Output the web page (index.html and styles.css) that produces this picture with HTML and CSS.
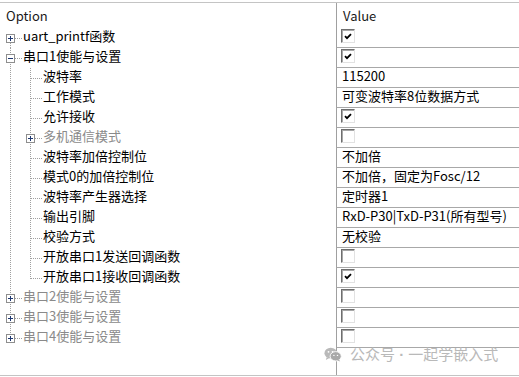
FILE: index.html
```html
<!DOCTYPE html>
<html>
<head>
<meta charset="utf-8">
<link rel="stylesheet" href="styles.css">
</head>
<body>
<div class="grid">
  <div class="hd">Option</div>
  <div class="hd v">Value</div>

  <div class="opt"><span class="g vb h"><svg class="box" viewBox="0 0 9 9"><rect x=".5" y=".5" width="8" height="8"/><path d="M2 4.5h5M4.5 2v5"/></svg></span><span class="lbl">uart_printf函数</span></div>
  <div class="val"><span class="cb"><svg viewBox="0 0 8 7"><path d="M1 3.2L3 5.2L7 1.2"/></svg></span></div>

  <div class="opt"><span class="g v h"><svg class="box" viewBox="0 0 9 9"><rect x=".5" y=".5" width="8" height="8"/><path d="M2 4.5h5"/></svg></span><span class="lbl">串口1使能与设置</span></div>
  <div class="val"><span class="cb"><svg viewBox="0 0 8 7"><path d="M1 3.2L3 5.2L7 1.2"/></svg></span></div>

  <div class="opt"><span class="g v"></span><span class="g v h"></span><span class="lbl">波特率</span></div>
  <div class="val"><span class="t">115200</span></div>

  <div class="opt"><span class="g v"></span><span class="g v h"></span><span class="lbl">工作模式</span></div>
  <div class="val"><span class="t">可变波特率8位数据方式</span></div>

  <div class="opt"><span class="g v"></span><span class="g v h"></span><span class="lbl">允许接收</span></div>
  <div class="val"><span class="cb"><svg viewBox="0 0 8 7"><path d="M1 3.2L3 5.2L7 1.2"/></svg></span></div>

  <div class="opt"><span class="g v"></span><span class="g v h"><svg class="box" viewBox="0 0 9 9"><rect x=".5" y=".5" width="8" height="8"/><path d="M2 4.5h5M4.5 2v5"/></svg></span><span class="lbl dim">多机通信模式</span></div>
  <div class="val"><span class="cb off"></span></div>

  <div class="opt"><span class="g v"></span><span class="g v h"></span><span class="lbl">波特率加倍控制位</span></div>
  <div class="val"><span class="t">不加倍</span></div>

  <div class="opt"><span class="g v"></span><span class="g v h"></span><span class="lbl">模式0的加倍控制位</span></div>
  <div class="val"><span class="t">不加倍，固定为Fosc/12</span></div>

  <div class="opt"><span class="g v"></span><span class="g v h"></span><span class="lbl">波特率产生器选择</span></div>
  <div class="val"><span class="t">定时器1</span></div>

  <div class="opt"><span class="g v"></span><span class="g v h"></span><span class="lbl">输出引脚</span></div>
  <div class="val"><span class="t">RxD-P30|TxD-P31(所有型号)</span></div>

  <div class="opt"><span class="g v"></span><span class="g v h"></span><span class="lbl">校验方式</span></div>
  <div class="val"><span class="t">无校验</span></div>

  <div class="opt"><span class="g v"></span><span class="g v h"></span><span class="lbl">开放串口1发送回调函数</span></div>
  <div class="val"><span class="cb off"></span></div>

  <div class="opt"><span class="g v"></span><span class="g vt h"></span><span class="lbl">开放串口1接收回调函数</span></div>
  <div class="val"><span class="cb"><svg viewBox="0 0 8 7"><path d="M1 3.2L3 5.2L7 1.2"/></svg></span></div>

  <div class="opt"><span class="g v h"><svg class="box" viewBox="0 0 9 9"><rect x=".5" y=".5" width="8" height="8"/><path d="M2 4.5h5M4.5 2v5"/></svg></span><span class="lbl dim">串口2使能与设置</span></div>
  <div class="val"><span class="cb off"></span></div>

  <div class="opt"><span class="g v h"><svg class="box" viewBox="0 0 9 9"><rect x=".5" y=".5" width="8" height="8"/><path d="M2 4.5h5M4.5 2v5"/></svg></span><span class="lbl dim">串口3使能与设置</span></div>
  <div class="val"><span class="cb off"></span></div>

  <div class="opt"><span class="g vt h"><svg class="box" viewBox="0 0 9 9"><rect x=".5" y=".5" width="8" height="8"/><path d="M2 4.5h5M4.5 2v5"/></svg></span><span class="lbl dim">串口4使能与设置</span></div>
  <div class="val"><span class="cb off"></span></div>

  <div class="fill-l"></div>
  <div class="fill-r"></div>
</div>

<div class="wm">
  <svg class="wx" viewBox="0 0 20 16">
    <ellipse cx="7.5" cy="6.5" rx="7" ry="6" fill="#b9b9b9"/>
    <path d="M3 11l-1 3 3.5-1.8z" fill="#b9b9b9"/>
    <ellipse cx="13" cy="10" rx="6.2" ry="5.2" fill="#a9a9a9" stroke="#fff" stroke-width="1"/>
    <path d="M16.5 13.5l1.5 2.2-3.5-1.2z" fill="#a9a9a9"/>
    <circle cx="5" cy="5" r="1" fill="#fff"/>
    <circle cx="9.5" cy="5" r="1" fill="#fff"/>
    <circle cx="11" cy="9" r=".8" fill="#fff"/>
    <circle cx="15" cy="9" r=".8" fill="#fff"/>
  </svg>
  <span>公众号<span class="dot"> · </span>一起学嵌入式</span>
</div>
</body>
</html>
```

FILE: styles.css
```css
html, body {
  margin: 0;
  background: #fff;
}
body {
  width: 519px;
  height: 377px;
  overflow: hidden;
  position: relative;
  font-family: "Noto Sans CJK SC", "Microsoft YaHei", sans-serif;
  font-size: 13px;
  line-height: 20px;
  color: #000;
}
.grid {
  margin-top: 2px;
  border-top: 1px solid #c4c4c4;
  border-bottom: 1px solid #c4c4c4;
  height: 372px;
  display: grid;
  grid-template-columns: 336px 1fr;
  grid-template-rows: 25px repeat(16, 20px) 1fr;
}
.hd {
  padding-left: 6px;
  line-height: 26px;
  color: #1a1a1a;
}
.hd.v {
  border-left: 1px solid #a0a0a0;
}
.opt {
  display: flex;
  align-items: flex-start;
  white-space: nowrap;
}
.g {
  flex: none;
  align-self: stretch;
  width: 20px;
  position: relative;
}
.g.v::before, .g.vt::before, .g.vb::before {
  content: "";
  position: absolute;
  left: 10px;
  width: 1px;
  top: 0;
  bottom: 0;
  background: repeating-linear-gradient(to bottom, #a0a0a0 0 1px, transparent 1px 2px);
}
.g.vt::before { bottom: auto; height: 11px; }
.g.vb::before { top: 11px; }
.g.h::after {
  content: "";
  position: absolute;
  left: 11px;
  right: -3px;
  top: 10px;
  height: 1px;
  background: repeating-linear-gradient(to right, #a0a0a0 0 1px, transparent 1px 2px);
}
.box {
  position: absolute;
  left: 6px;
  top: 6px;
  width: 9px;
  height: 9px;
  z-index: 1;
}
.box rect {
  fill: #fff;
  stroke: #8e8e8e;
}
.box path {
  stroke: #1d3670;
  stroke-width: 1;
}
.lbl {
  padding-left: 3px;
  line-height: 15px;
}
.dim {
  color: #8a8a8a;
}
.val {
  border-left: 1px solid #a0a0a0;
  border-bottom: 1px solid #a8a8a8;
  padding-left: 4px;
  display: flex;
  align-items: flex-start;
  white-space: nowrap;
}
.val .t {
  line-height: 15px;
  padding-left: 1px;
}
.cb {
  margin-top: 1px;
  width: 14px;
  height: 14px;
  box-sizing: border-box;
  border-top: 1px solid #6e6e6e;
  border-left: 1px solid #6e6e6e;
  border-right: 1px solid #e2e2e2;
  border-bottom: 1px solid #e2e2e2;
  box-shadow: inset 1px 1px 0 #a8a8a8;
  background: #fff;
  display: flex;
  align-items: center;
  justify-content: center;
}
.cb svg {
  width: 8px;
  height: 7px;
  margin: 1px 0 0 0;
}
.cb svg path {
  fill: none;
  stroke: #000;
  stroke-width: 1.8;
}
.fill-r {
  border-left: 1px solid #a0a0a0;
}
.wm {
  position: absolute;
  left: 324px;
  top: 345px;
  display: flex;
  align-items: center;
  gap: 8px;
  color: #b9b9b9;
  font-size: 15px;
  line-height: 18px;
}
.wm .dot {
  font-family: "Liberation Sans", sans-serif;
  font-weight: bold;
  white-space: pre;
}
.wx {
  width: 18px;
  height: 15px;
}
```
